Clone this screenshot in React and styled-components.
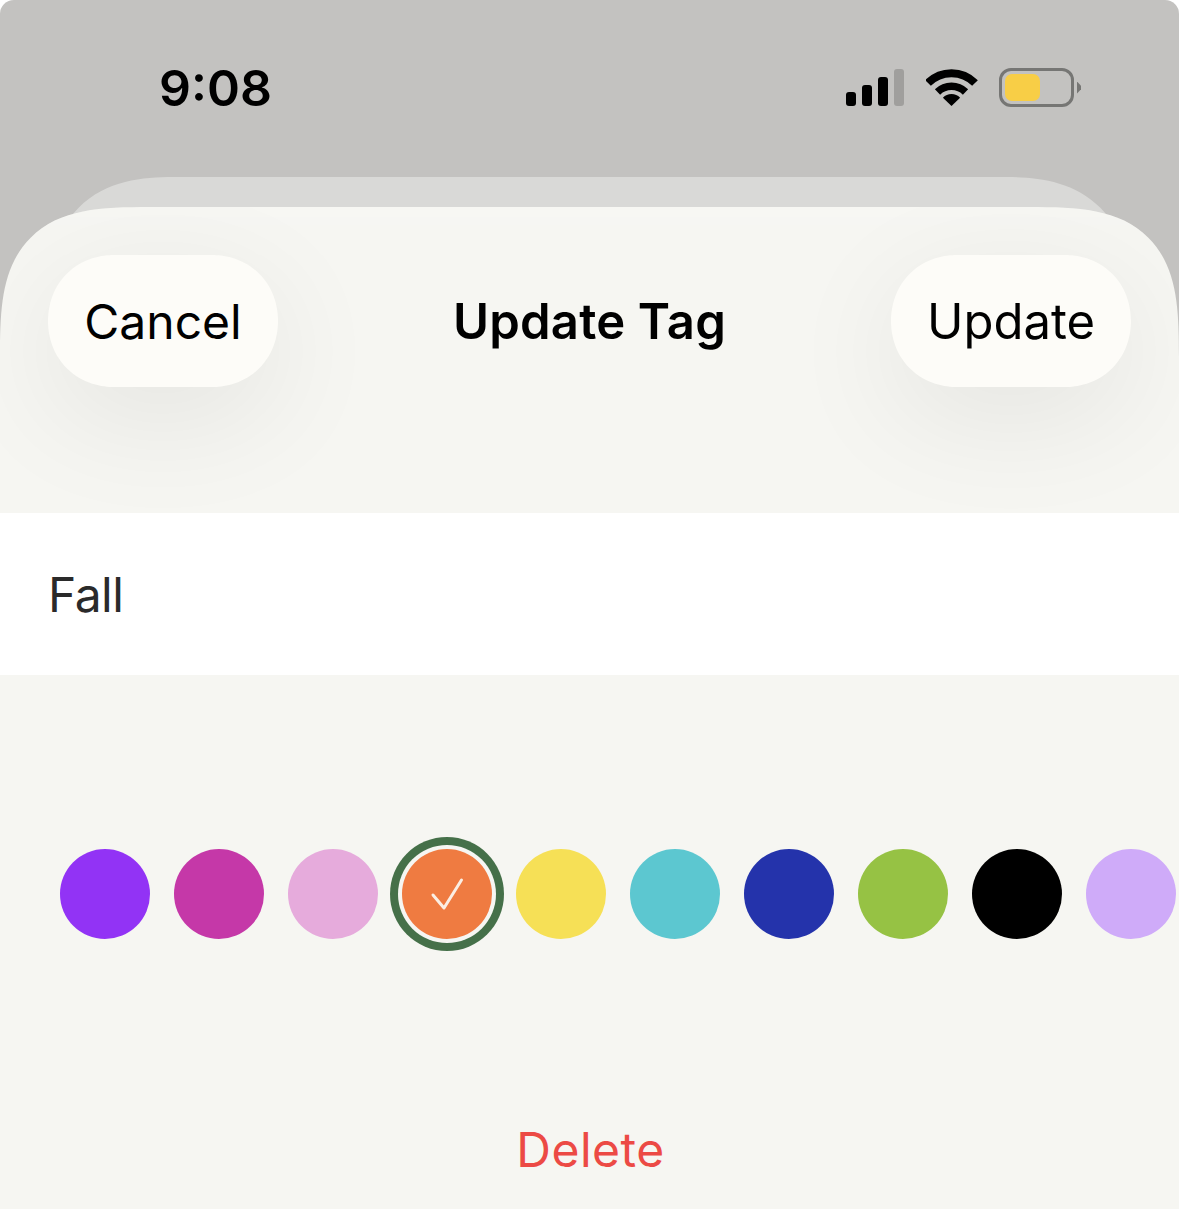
import React from "react";
import styled, { createGlobalStyle } from "styled-components";

const Global = createGlobalStyle`
  html, body { margin: 0; padding: 0; background: #fff; }
  * { box-sizing: border-box; }
`;

const Screen = styled.div`
  width: 1179px;
  height: 1209px;
  background: #c3c2c0;
  border-radius: 14px 14px 0 0;
  overflow: hidden;
  display: flex;
  flex-direction: column;
  font-family: Inter, "Liberation Sans", sans-serif;
`;

const StatusBar = styled.div`
  height: 177px;
  flex: none;
  display: flex;
  justify-content: space-between;
  align-items: flex-start;
  padding: 58px 98px 0 159px;
`;

const Time = styled.div`
  font-size: 50px;
  line-height: 60px;
  font-weight: 600;
  color: #000;
`;

const StatusIcons = styled.div`
  display: flex;
  align-items: center;
  gap: 22px;
  margin-top: 10px;
`;

const Signal = styled.div`
  display: flex;
  align-items: flex-end;
  gap: 6px;
  height: 37px;
`;

const Bar = styled.span`
  width: 10px;
  height: ${(p) => p.$h}px;
  border-radius: 3px;
  background: ${(p) => (p.$dim ? "#a09f9d" : "#000")};
`;

const Battery = styled.div`
  display: flex;
  align-items: center;
  gap: 3px;
  margin-left: -1px;
`;

const BatteryBody = styled.div`
  width: 75px;
  height: 39px;
  border: 3px solid #767674;
  border-radius: 12px;
  padding: 3px;
`;

const BatteryFill = styled.div`
  width: 35px;
  height: 100%;
  background: #f8ce46;
  border-radius: 7px;
`;

const BatteryTip = styled.div`
  width: 4px;
  height: 12px;
  background: #767674;
  clip-path: polygon(0 0, 100% 35%, 100% 65%, 0 100%);
`;

const BackSheet = styled.div`
  flex: none;
  height: 200px;
  margin: 0 48px -170px;
  background: #d9d9d7;
  border-radius: 125px 125px 0 0;
  corner-shape: superellipse(1.3);
`;

const Sheet = styled.div`
  position: relative;
  flex: 1;
  background: #f6f6f2;
  border-radius: 150px 150px 0 0;
  corner-shape: superellipse(1.6);
  overflow: hidden;
  display: flex;
  flex-direction: column;
`;

const Header = styled.div`
  height: 306px;
  flex: none;
  padding: 48px 48px 0;
  display: grid;
  grid-template-columns: 1fr auto 1fr;
  align-items: start;
  box-shadow: inset 0 40px 50px -30px rgba(255, 255, 255, 0.2);
`;

const PillButton = styled.div`
  width: ${(p) => p.$w}px;
  height: 132px;
  justify-self: ${(p) => p.$side};
  border-radius: 66px;
  corner-shape: superellipse(1.05);
  background: #fdfcf8;
  box-shadow: 0 30px 120px rgba(0, 0, 0, 0.075);
  display: flex;
  align-items: center;
  justify-content: center;
  font-size: ${(p) => p.$size}px;
  color: #000;
`;

const Title = styled.div`
  height: 132px;
  display: flex;
  align-items: center;
  font-size: 49px;
  letter-spacing: 0.2px;
  font-weight: 600;
  color: #000;
`;

const NameField = styled.div`
  flex: none;
  height: 162px;
  background: #fff;
  padding-left: 48px;
  display: flex;
  align-items: center;
  font-size: 48px;
  letter-spacing: -0.5px;
  color: #2a2a2a;
`;

const SwatchRow = styled.div`
  flex: none;
  display: flex;
  gap: 24px;
  padding: 174px 0 0 60px;
`;

const Swatch = styled.div`
  flex: none;
  width: 90px;
  height: 90px;
  border-radius: 50%;
  background: ${(p) => p.$color};
  display: flex;
  ${(p) => p.$selected && "box-shadow: 0 0 0 4px #f6f6f2, 0 0 0 12px #457049;"}
`;

const DeleteButton = styled.div`
  margin-top: 181px;
  padding-left: 2px;
  text-align: center;
  font-size: 48px;
  letter-spacing: 0.5px;
  line-height: 60px;
  color: #ec4a45;
`;

const colors = ["#9233f5", "#c538a8", "#e6abdc", "#ef7b41", "#f6e056", "#5cc7d0", "#2433ab", "#96c244", "#000000", "#cfabf9"];

const Wifi = () => (
  <svg width="52" height="38" viewBox="0 0 52 38">
    <path d="M2 14 A33 33 0 0 1 49 14" fill="none" stroke="#000" strokeWidth="8" />
    <path d="M11.5 23 A20 20 0 0 1 39.5 23" fill="none" stroke="#000" strokeWidth="7.5" />
    <path d="M25.5 37 L16.9 28.7 A12 12 0 0 1 34.1 28.7 Z" fill="#000" />
  </svg>
);

const Check = () => (
  <svg width="90" height="90" viewBox="0 0 90 90">
    <path d="M31 46 L42 59 L59.5 31" fill="none" stroke="#fbeee3" strokeWidth="3" strokeLinecap="round" strokeLinejoin="round" />
  </svg>
);

export default function App() {
  return (
    <>
      <Global />
      <Screen>
        <StatusBar>
          <Time>9:08</Time>
          <StatusIcons>
            <Signal>
              <Bar $h={14} />
              <Bar $h={21} />
              <Bar $h={29} />
              <Bar $h={37} $dim />
            </Signal>
            <Wifi />
            <Battery>
              <BatteryBody>
                <BatteryFill />
              </BatteryBody>
              <BatteryTip />
            </Battery>
          </StatusIcons>
        </StatusBar>
        <BackSheet />
        <Sheet>
          <Header>
            <PillButton $w={230} $size={48} $side="start">Cancel</PillButton>
            <Title>Update Tag</Title>
            <PillButton $w={240} $size={49} $side="end">Update</PillButton>
          </Header>
          <NameField>Fall</NameField>
          <SwatchRow>
            {colors.map((c, i) => (
              <Swatch key={c} $color={c} $selected={i === 3}>
                {i === 3 && <Check />}
              </Swatch>
            ))}
          </SwatchRow>
          <DeleteButton>Delete</DeleteButton>
        </Sheet>
      </Screen>
    </>
  );
}
